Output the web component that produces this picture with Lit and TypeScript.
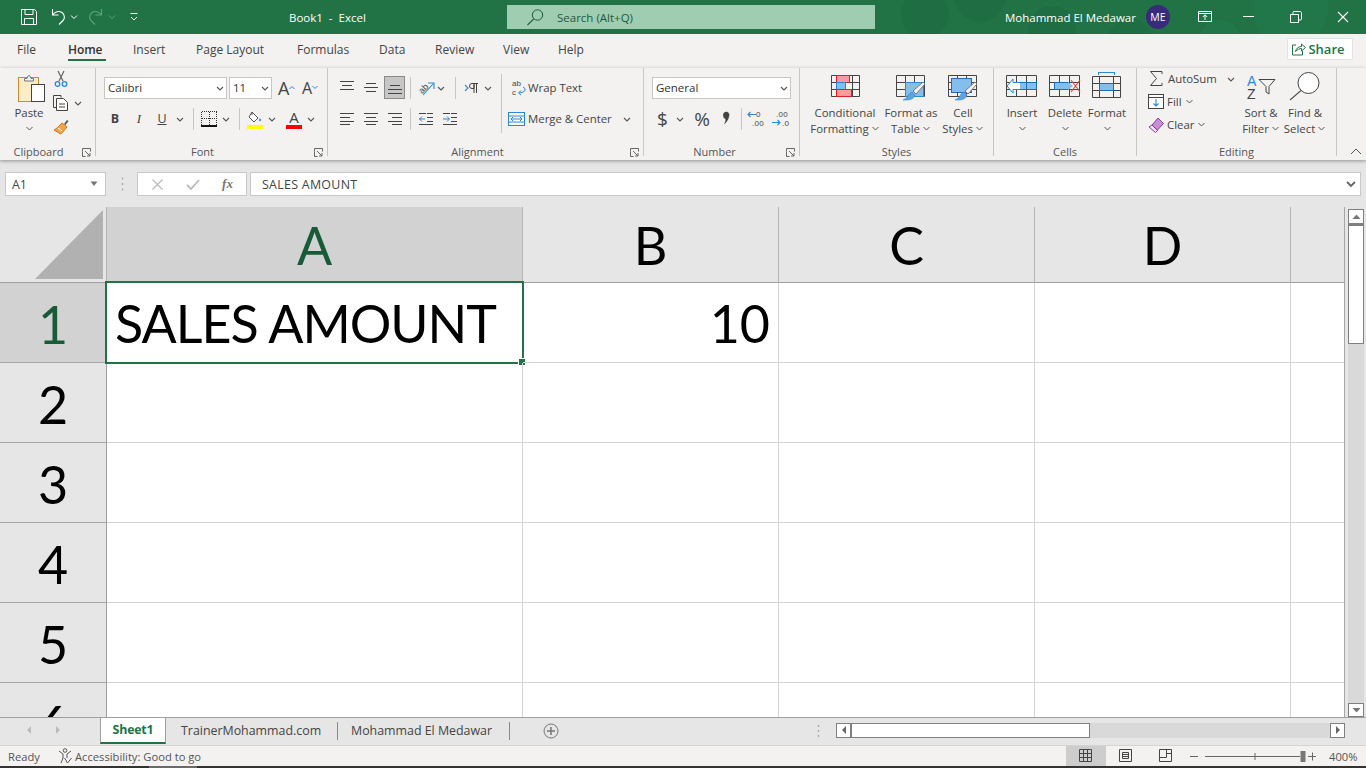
import { LitElement, html, css, svg, TemplateResult, SVGTemplateResult } from "lit";
import { customElement } from "lit/decorators.js";

type Item = number | TemplateResult;
const ic = (w: number, h: number, c: SVGTemplateResult) =>
  html`<svg class="ic" width=${w} height=${h} viewBox="0 0 ${w} ${h}" fill="none">${c}</svg>`;
const row = (items: Item[], cls = "row") =>
  html`<div class=${cls}>${items.map((i) => (typeof i === "number" ? html`<span class="sp" style="width:${i}px"></span>` : i))}</div>`;
const sl = (w: number, c: unknown, cls = "") => html`<span class="sl ${cls}" style="width:${w}px">${c}</span>`;
const chev = (w = 12) => ic(w, 12, svg`<path d="M${w / 2 - 3} 5l3 3 3-3" stroke="#555" stroke-width="1.1"/>`);
const sep = html`<span class="vsep"></span>`;

const hl = (arr: [number, number, number][]) =>
  svg`<path d=${arr.map(([x, y, l]) => `M${x} ${y + 0.5}h${l}`).join("")} stroke="#444"/>`;

const big = (w: number, icon: TemplateResult, l1: string, l2: string | null, arrow = true) => html`
  <div class="big" style="width:${w}px">
    ${icon}
    <div class="bl">${l1}</div>
    <div class="bl">${l2 ?? ""}${arrow ? (l2 ? html`<svg class="ic inl" width="9" height="8" viewBox="0 0 9 8" fill="none"><path d="M1.5 2l3 3 3-3" stroke="#555"/></svg>` : html`<svg class="ic" width="9" height="8" viewBox="0 0 9 8" fill="none"><path d="M1.5 2l3 3 3-3" stroke="#555"/></svg>`) : ""}</div>
  </div>`;

const brush = (x: number, y: number) => svg`
  <g transform="translate(${x} ${y})">
    <path d="M20 0l2 2-9 10-3-3z" fill="#f3f2f1" stroke="#777"/>
    <path d="M9 10l3 3c-1 4-5 5-9 5-1 0-2 0-3 0 3-1 5-4 6-6 1-1 2-2 3-2z" fill="#5ca4dc" stroke="#2b88d8" stroke-width=".6"/>
  </g>`;

const launcher = html`<svg class="launch ic" width="9" height="9" viewBox="0 0 9 9" fill="none"><path d="M.5 3.5V.5h8v3M.5 3.5v5h3M3 3l5 5M8 5v3H5" stroke="#666"/></svg>`;

@customElement("app-root")
export class AppRoot extends LitElement {
  static styles = css`
    :host { display: block; width: 1366px; height: 768px; overflow: hidden; font-family: "Open Sans", "Noto Sans", sans-serif; font-size: 11.4px; color: #444; background: #e6e6e6; }
    * { box-sizing: border-box; }
    .ic { display: block; flex: none; overflow: visible; }
    .inl { display: inline-block; margin-left: 2px; }
    .sp { flex: none; display: block; }
    .sl { flex: none; display: flex; align-items: center; white-space: nowrap; }
    .ctr { justify-content: center; }
    .row { display: flex; align-items: center; height: 23px; }
    .vsep { flex: none; width: 1px; height: 22px; background: #c8c6c4; }

    .title { position: relative; height: 34px; background: #217346; display: flex; align-items: center; color: #fff; overflow: hidden; font-size: 11.5px; }
    .blobs { position: absolute; inset: 0; }
    .title > *:not(.blobs) { position: relative; }
    .search { width: 368px; height: 24px; background: #a0cdb1; color: #1c5b3b; display: flex; align-items: center; font-size: 11.5px; }
    .avatar { width: 24px; height: 24px; border-radius: 50%; background: #392a7b; color: #fff; display: flex; align-items: center; justify-content: center; font-size: 10.5px; }

    .tabs { height: 34px; background: #f3f2f1; display: flex; align-items: center; font-size: 12px; color: #444; padding-bottom: 4px; }
    .home { position: relative; height: 100%; font-weight: 600; color: #333; letter-spacing: -.1px; }
    .home::after { content: ""; position: absolute; left: 0; width: 38px; top: 25px; height: 2px; background: #217346; }
    .share { margin-left: auto; margin-right: 13px; width: 66px; height: 22px; background: #fff; border: 1px solid #e4e2e0; border-radius: 2px; color: #217346; display: flex; align-items: center; justify-content: center; gap: 2px; padding-right: 4px; font-weight: 600; font-size: 13px; }

    .ribbon { height: 92px; background: #f3f2f1; display: grid; grid-template-columns: 96px 232px 316px 156px 194px 143px 200px 1fr; position: relative; z-index: 1; box-shadow: 0 1px 4px rgba(0,0,0,.28); }
    .grp { position: relative; height: 88px; border-right: 1px solid #c8c6c4; display: flex; }
    .grp.last { border: none; }
    .lbl { position: absolute; left: 0; right: 0; top: 78px; height: 12px; line-height: 12px; text-align: center; font-size: 11px; color: #555; }
    .lbl.clip { right: 18px; }
    .lbl.fnt { right: 18px; }
    .lbl.aln { right: 16px; }
    .lbl.nmb { right: 14px; }
    .launch { position: absolute; right: 4px; top: 80px; }
    .col { display: flex; flex-direction: column; gap: 8px; padding-top: 8px; }
    .col.cl { padding-top: 0; gap: 0; margin-top: -1px; }
    .col.cb { padding-top: 0; gap: 1px; margin-top: -1px; }
    .big { flex: none; display: flex; flex-direction: column; align-items: center; padding-top: 4px; }
    .bl { height: 16px; line-height: 16px; white-space: nowrap; display: flex; align-items: center; justify-content: center; }
    .vline { flex: none; width: 1px; height: 59px; margin-top: 6px; background: #c8c6c4; }
    .box { height: 22px; background: #fff; border: 1px solid #c8c6c4; display: flex; align-items: center; padding-left: 3px; justify-content: space-between; font-size: 11.5px; color: #333; flex: none; }
    .bold { font-weight: 700; font-size: 12.5px; }
    .ital { font-style: italic; font-size: 13px; font-family: "Liberation Serif", serif; }
    .und { text-decoration: underline; font-size: 12.5px; }
    .bigA { font-size: 18px; line-height: 20px; color: #444; }
    .num { font-size: 19px; color: #444; }
    .hi { background: #c6c6c6; border: 1px solid #8a8a8a; height: 23px; justify-content: center; }

    .fbar { height: 47px; background: #e6e6e6; padding-top: 12px; display: flex; gap: 0; box-shadow: inset 0 3px 3px -2px rgba(0,0,0,.12); }
    .fbox { height: 24px; background: #fff; border: 1px solid #c8c8c8; display: flex; align-items: center; flex: none; color: #444; font-size: 12.4px; }
    .name { width: 101px; margin-left: 5px; padding: 0 6px; justify-content: space-between; }
    .fns { width: 110px; justify-content: space-around; padding: 0 2px; margin-right: 3px; }
    .fx { font-family: "Liberation Serif", serif; font-style: italic; font-weight: 700; font-size: 13px; color: #777; }
    .input { width: 1111px; padding: 0 4px 0 11px; justify-content: space-between; }
    .input .tx { letter-spacing: .3px; }

    .sheetwrap { height: 510px; display: flex; }
    .sheet { width: 1345px; height: 510px; overflow: hidden; border-right: 1px solid #a6a6a6; display: grid; grid-template-columns: 107px 416px 256px 256px 256px 54px; grid-template-rows: 76px repeat(6, 80px); font-family: Lato, "Liberation Sans", sans-serif; color: #000; background: #fff; }
    .corner { background: #e6e6e6; border-right: 1px solid #b0b0b0; border-bottom: 1px solid #9f9f9f; display: flex; align-items: flex-end; justify-content: flex-end; padding: 0 3px 3px 0; }
    .ch { background: #e6e6e6; border-right: 1px solid #b4b4b4; border-bottom: 1px solid #9f9f9f; display: flex; align-items: center; justify-content: center; font-size: 52px; line-height: 1; padding-top: 1px; }
    .ch.end { border-right: none; }
    .rh { background: #e6e6e6; border-right: 1px solid #9f9f9f; border-bottom: 1px solid #a6a6a6; display: flex; align-items: center; justify-content: center; font-size: 52px; line-height: 1; padding-top: 3px; }
    .sel { background: #d2d2d2; color: #185c37; }
    .c { border-right: 1px solid #d4d4d4; border-bottom: 1px solid #d4d4d4; font-size: 52px; display: flex; align-items: center; padding: 1px 8px 0 8px; white-space: nowrap; position: relative; }
    .c.sales { letter-spacing: -1px; }
    .c.end { border-right: none; }
    .c.r { justify-content: flex-end; }
    .cursor { position: absolute; left: -2px; top: -2px; width: 419px; height: 83px; border: 2px solid #217346; pointer-events: none; }
    .handle { position: absolute; right: -4px; bottom: -4px; width: 6px; height: 6px; background: #217346; border: 1px solid #fff; box-sizing: content-box; }

    .vs { width: 21px; height: 510px; background: #e6e6e6; padding: 2px 0 0 3px; display: flex; flex-direction: column; }
    .sb { width: 16px; background: #fff; border: 1px solid #7f7f7f; flex: none; display: flex; align-items: center; justify-content: center; }
    .sb.up { height: 15px; }
    .sb.thumb { height: 120px; border-top-width: 2px; }
    .sb.down { height: 14px; }
    .track { flex: 1; width: 16px; background: #d9d9d9; }

    .tabsbar { height: 28px; background: #e6e6e6; border-top: 1px solid #9f9f9f; display: flex; align-items: center; font-size: 12.4px; color: #444; padding-bottom: 2px; }
    .stab { height: 26px; margin-top: 0; width: 66px; background: #fff; color: #217346; font-weight: 700; border-bottom: 2px solid #217346; border-left: 1px solid #9f9f9f; border-right: 1px solid #9f9f9f; display: flex; align-items: center; justify-content: center; font-size: 12.4px; letter-spacing: -.2px; }
    .hs { height: 15px; display: flex; width: 509px; }
    .hb { width: 15px; height: 15px; background: #fff; border: 1px solid #7f7f7f; display: flex; align-items: center; justify-content: center; flex: none; }
    .hthumb { width: 239px; height: 15px; background: #fff; border: 1px solid #7f7f7f; flex: none; }
    .htrack { flex: 1; background: #d9d9d9; }
    .tsep { width: 1px; height: 18px; background: #8a8a8a; flex: none; }

    .status { height: 21px; background: #f3f2f1; border-top: 1px solid #d4d4d4; display: flex; align-items: center; font-size: 11.2px; color: #555; }
    .vbtn { width: 40px; height: 20px; display: flex; align-items: center; justify-content: center; flex: none; }
    .vbtn.on { background: #cdcdcd; }
    .foot { height: 2px; background: #333; display: flex; }
    .foot span { width: 48px; margin-left: 149px; background: #6a6a6a; }
    .swatchy { width: 16px; height: 20px; flex-direction: column; justify-content: flex-end; }
    .yel { display: block; width: 16px; height: 4px; background: #ffff00; }
    .red { display: block; width: 16px; height: 4px; background: #ff0000; }
    .aA { font-size: 15px; line-height: 15px; color: #444; }
    .smallA { font-size: 16px; }
    .spacer5 { width: 5px; flex: none; }
    .w173 { width: 173px; }
    .w103 { width: 103px; }
  `;

  render() {
    return html`${this.titleBar()}${this.tabs()}${this.ribbon()}${this.formula()}${this.sheet()}${this.bottom()}`;
  }

  titleBar() {
    return html`<div class="title">
      <svg class="blobs" width="1366" height="34" viewBox="0 0 1366 34"><g fill="#1f6e43"><circle cx="925" cy="14" r="24"/><circle cx="980" cy="-4" r="26"/><circle cx="1052" cy="30" r="24"/><circle cx="1130" cy="40" r="22"/></g><g fill="#22774a"><circle cx="1290" cy="8" r="38"/><circle cx="1220" cy="40" r="20"/></g></svg>
      ${row([
        21,
        ic(16, 16, svg`<path d="M.5.5h13l2 2v13H.5zM4 .5v5h8v-5M3.500 15.500v-6h9v6" stroke="#fff"/>`),
        14,
        ic(15, 16, svg`<path d="M1.500 0v6h6M1.500 6C4 2.500 8 1.500 11 3.500c3 2.500 3 6 1 8l-4 4" stroke="#fff" stroke-width="1.100"/>`),
        4,
        ic(8, 8, svg`<path d="M1 2.500l3 3 3-3" stroke="#fff"/>`),
        10,
        ic(15, 16, svg`<path d="M13.500 0v6h-6M13.500 6C11 2.500 7 1.500 4 3.500c-3 2.500-3 6-1 8l4 4" stroke="#5fa07f" stroke-width="1.100"/>`),
        5,
        ic(8, 8, svg`<path d="M1 2.500l3 3 3-3" stroke="#5fa07f"/>`),
        14,
        ic(8, 8, svg`<path d="M.5.5h7M1 4l3 3 3-3" stroke="#fff"/>`),
        151,
        sl(78, "Book1\u00a0\u00a0-\u00a0\u00a0Excel"),
        140,
      ], "row")}
      <div class="search">
        <span class="sp" style="width:19px"></span>
        ${ic(18, 18, svg`<circle cx="11.500" cy="7" r="5.200" stroke="#1c5b3b"/><path d="M7.800 10.800L1.500 17" stroke="#1c5b3b" stroke-width="1.100"/>`)}
        <span class="sp" style="width:13px"></span>Search (Alt+Q)
      </div>
      ${row([130, sl(134, "Mohammad El Medawar"), 7, html`<div class="avatar">ME</div>`, 27,
        ic(16, 12, svg`<path d="M.5 2.500h13M.5.5h13v10H.5zM7 9V4M4.800 6L7 3.800 9.200 6" stroke="#fff" transform="translate(1 0)"/>`),
        30, ic(12, 2, svg`<path d="M0 .5h11" stroke="#fff"/>`), 35,
        ic(12, 12, svg`<path d="M.5 3.500h8v8h-8zM3 3V1.500q0-1 1-1h6q1 0 1.500 1V8q0 1-1 1H9" stroke="#fff"/>`), 35,
        ic(12, 12, svg`<path d="M1 1l10 10M11 1L1 11" stroke="#fff" stroke-width="1.100"/>`),
      ])}
    </div>`;
  }

  tabs() {
    const t: [string, number][] = [["File", 51], ["Home", 65], ["Insert", 63], ["Page Layout", 101], ["Formulas", 82], ["Data", 56], ["Review", 68], ["View", 55], ["Help", 40]];
    return html`<div class="tabs">
      <span class="sp" style="width:17px"></span>
      ${t.map(([n, w]) => sl(w, n, n === "Home" ? "home" : ""))}
      <div class="share">
        ${ic(15, 14, svg`<path d="M5 3H1.500v10h10V9" stroke="#217346"/><path d="M4.500 9.500c.5-3 3-5 6-5V2l4 3.500-4 3.500V6.500c-2 0-4 1-6 3z" stroke="#217346" fill="#fff"/>`)}
        Share
      </div>
    </div>`;
  }

  ribbon() {
    return html`<div class="ribbon">
      ${this.clipboard()}${this.font()}${this.alignment()}${this.number()}${this.styles()}${this.cells()}${this.editing()}
      <div class="grp last">
        <svg class="ic launch" width="12" height="7" viewBox="0 0 12 7" fill="none"><path d="M1 6l5-5 5 5" stroke="#555"/></svg>
      </div>
    </div>`;
  }

  clipboard() {
    const paste = ic(48, 33, svg`
      <rect x="13.500" y="5.500" width="20" height="24" fill="#fbedc6" stroke="#d08b2e"/>
      <path d="M19.500 9V6.500h2.500q.5-3 2-3t2 3h2.500V9z" fill="#f3f2f1" stroke="#777"/>
      <rect x="26.500" y="12.500" width="13" height="17" fill="#fff" stroke="#444"/>`);
    const cut = ic(16, 18, svg`
      <path d="M5 1l5 10M11 1L6 11" stroke="#666" stroke-width="1.200"/>
      <circle cx="4.500" cy="14" r="2.300" stroke="#2b88d8" stroke-width="1.300"/><circle cx="11.500" cy="14" r="2.300" stroke="#2b88d8" stroke-width="1.300"/>`);
    const copy = ic(16, 16, svg`
      <path d="M8 2.500V.5H.5v12h3" stroke="#444" fill="#f3f2f1"/><path d="M3.500 3.500h7l4 4v8h-11z" stroke="#444" fill="#fff"/><path d="M6 9h6M6 12h6" stroke="#444"/>`);
    const fmt = ic(16, 16, svg`
      <path d="M11 5l3-4 1.500 1-3 4z" fill="#555"/><path d="M9 4l5 4-6 7-7-4 3-2z" fill="#f0a54a" stroke="#d2761e"/><path d="M5 9l4 3" stroke="#fff"/>`);
    return html`<div class="grp">
      <span class="spacer5"></span>
      ${big(48, paste, "Paste", null)}
      <div class="col cb">
        ${row([cut])}
        ${row([copy, 3, chev()])}
        ${row([fmt])}
      </div>
      <div class="lbl clip">Clipboard</div>${launcher}
    </div>`;
  }

  font() {
    return html`<div class="grp">
      <div class="col">
        ${row([8, html`<div class="box" style="width:123px">Calibri${chev()}</div>`, 2, html`<div class="box" style="width:43px">11${chev()}</div>`, 6,
          sl(16, html`<span class="bigA">A</span>${ic(6, 8, svg`<path d="M.5 5l2.500-2.500L5.500 5" stroke="#2b88d8"/>`)}`), 8,
          sl(17, html`<span class="bigA smallA">A</span>${ic(6, 8, svg`<path d="M.5 2l2.500 2.500L5.500 2" stroke="#2b88d8"/>`)}`)])}
        ${row([11, sl(16, "B", "ctr bold"), 8, sl(16, "I", "ctr ital"), 7, sl(16, "U", "ctr und"), 4, chev(), 7, sep, 7,
          ic(16, 16, svg`<g shape-rendering="crispEdges"><path d="M.5.5h15M.5 7.500h15M8 .5v14M.5.5v14M15.500.5v14" stroke="#333" stroke-dasharray="1 1"/><path d="M0 15h16" stroke="#111" stroke-width="1.500"/></g>`), 3, chev(), 7, sep, 7,
          html`<div class="sl swatchy">${ic(16, 14, svg`<path d="M5 1l6 6-4 4-5-5zM5 1v3" stroke="#555" fill="#fff"/><path d="M13 7q1.500 2 .5 3t-1.500-1z" fill="#2b6fb0"/>`)}<span class="yel"></span></div>`, 3, chev(), 8,
          html`<div class="sl swatchy"><span class="aA">A</span><span class="red"></span></div>`, 3, chev()])}
      </div>
      <div class="lbl fnt">Font</div>${launcher}
    </div>`;
  }

  alignment() {
    const al = (a: [number, number, number][]) => ic(14, 16, hl(a));
    return html`<div class="grp">
      <div class="col w173">
        ${row([12, al([[0, 1, 14], [2, 5, 10], [0, 9, 14]]), 10, al([[2, 3, 10], [0, 7, 14], [2, 11, 10]]), 6,
          sl(21, al([[2, 5, 10], [0, 9, 14], [0, 13, 14]]), "hi"), 5, sep, 7,
          ic(17, 16, svg`<text x="0" y="11" font-size="9" fill="#444" font-family="Liberation Sans" transform="rotate(-45 6 8)">ab</text><path d="M5 15L15 4M10 3h6v6" stroke="#2b88d8" stroke-width="1.100"/>`),
          chev(), 8, sep, 9,
          ic(13, 14, svg`<path d="M0 4l3 3-3 3" stroke="#2b88d8" stroke-width="1.100"/><path d="M9 2.500H7a2.500 2.500 0 0 0 0 5h2zM9 2v10M11.500 2v10M7 2.500h6" stroke="#444"/>`), 4, chev()])}
        ${row([12, al([[0, 2, 14], [0, 6, 10], [0, 10, 14], [0, 13, 10]]), 10, al([[0, 2, 14], [2, 6, 10], [0, 10, 14], [2, 13, 10]]), 10, al([[0, 2, 14], [4, 6, 10], [0, 10, 14], [4, 13, 10]]), 8, sep, 8,
          ic(15, 14, svg`<path d="M0 7h6M3 4.500L.5 7 3 9.500" stroke="#2b88d8"/>${hl([[8, 1, 6], [8, 5, 6], [8, 9, 6], [0, 12, 14]])}<path d="M0 1.500h7" stroke="#444"/>`), 9,
          ic(15, 14, svg`<path d="M0 7h6M4 4.500L6.500 7 4 9.500" stroke="#2b88d8"/>${hl([[8, 1, 6], [8, 5, 6], [8, 9, 6], [0, 12, 14]])}<path d="M0 1.500h7" stroke="#444"/>`)])}
      </div>
      <div class="vline"></div>
      <div class="col">
        ${row([9, ic(16, 17, svg`<text x="1" y="7" font-size="8" fill="#444" font-family="Liberation Sans">ab</text><text x="1" y="16" font-size="8" fill="#444" font-family="Liberation Sans">c</text><path d="M12 8q3 1.500 2 3.500t-6 2.500M10 11.500L7.500 14l2.500 2" stroke="#2b88d8"/>`), 1, sl(58, "Wrap Text")])}
        ${row([6, ic(17, 16, svg`<rect x=".5" y="1.500" width="16" height="13" stroke="#2b88d8" fill="#fff"/><path d="M.5 5h16M.5 11h16M3 8h11M5 6L3 8l2 2M12 6l2 2-2 2" stroke="#2b88d8"/>`), 3, sl(93, "Merge & Center"), chev()])}
      </div>
      <div class="lbl aln">Alignment</div>${launcher}
    </div>`;
  }

  number() {
    const dec = (r: boolean) => ic(17, 18, svg`
      <text x=${r ? 4 : 8} y="7" font-size="8" fill="#444" font-family="Liberation Sans" letter-spacing=".3">${r ? ".00" : "0"}</text>
      <text x=${r ? 10 : 4} y="16" font-size="8" fill="#444" font-family="Liberation Sans" letter-spacing=".3">${r ? ".0" : ".00"}</text>
      ${r ? svg`<path d="M0 12.500h8M5.500 10l2.500 2.500L5.500 15" stroke="#2b88d8" stroke-width="1.100"/>`
          : svg`<path d="M0 4.500h8M2.500 2L0 4.500 2.500 7" stroke="#2b88d8" stroke-width="1.100"/>`}`);
    return html`<div class="grp">
      <div class="col">
        ${row([8, html`<div class="box" style="width:139px">General${chev()}</div>`])}
        ${row([13, sl(11, "$", "ctr num"), 6, chev(), 8, sl(16, "%", "ctr num"), 10,
          ic(12, 16, svg`<path d="M3 4a3.200 3.200 0 1 1 6 1.500q-.5 4-5 8 2-3.500 1.500-5.500Q3 7 3 4z" fill="#444"/>`), 9, sep, 6, dec(false), 7, dec(true)])}
      </div>
      <div class="lbl nmb">Number</div>${launcher}
    </div>`;
  }

  styles() {
    const grid = (x: number, y: number, w: number, h: number, cols: number[], rows: number[]) =>
      svg`<path d="M${x + .5} ${y + .5}h${w}v${h}h-${w}z${cols.map((c) => `M${x + c + .5} ${y}v${h + 1}`).join("")}${rows.map((r) => `M${x} ${y + r + .5}h${w + 1}`).join("")}" stroke="#444"/>`;
    const cond = ic(28, 33, svg`
      ${grid(0, 3, 28, 21, [7, 14, 21], [7, 14])}
      <rect x="5.500" y="3.500" width="13" height="7" fill="#fb9a9f" stroke="#e02020"/>
      <rect x="5.500" y="10.500" width="9" height="7" fill="#83beec" stroke="#2b88d8"/>
      <rect x="5.500" y="17.500" width="15" height="7" fill="#fb9a9f" stroke="#e02020"/>`);
    const tbl = ic(30, 33, svg`
      ${grid(0, 3, 28, 21, [9, 18], [7, 14])}
      <rect x="9.500" y="10.500" width="18" height="14" fill="#83beec" stroke="#2b88d8"/>
      ${brush(7, 10)}`);
    const cell = ic(30, 33, svg`
      ${grid(0, 3, 28, 21, [9, 18], [7, 14])}
      <rect x="3.500" y="6.500" width="20" height="14" fill="#83beec" stroke="#1f6cb0"/>
      ${brush(7, 10)}`);
    return html`<div class="grp">
      <span class="sp" style="width:8px"></span>
      ${big(74, cond, "Conditional", "Formatting")}
      ${big(58, tbl, "Format as", "Table")}
      ${big(46, cell, "Cell", "Styles")}
      <div class="lbl">Styles</div>
    </div>`;
  }

  cells() {
    const g = svg`<path d="M.5 3.500h30v21H.5zM.5 10.500h30M.5 17.500h30M10.500 3.500v21M20.500 3.500v21" stroke="#444"/>`;
    const ins = ic(32, 33, svg`${g}<rect x="10.500" y="10.500" width="20" height="7" fill="#83beec" stroke="#1f6cb0"/><path d="M20.500 10.500v7" stroke="#1f6cb0"/><path d="M14 10.500H7V7L1 14l6 7v-3.500h7" fill="#fff" stroke="#2b88d8"/>`);
    const del = ic(32, 33, svg`${g}<rect x="5.500" y="10.500" width="14" height="7" fill="#83beec" stroke="#1f6cb0"/><path d="M19 10l5 4-5 4z" fill="#83beec"/><path d="M22 8l9 12M31 8l-9 12" stroke="#f04040" stroke-width="1.100"/>`);
    const fmt = ic(30, 33, svg`<path d="M6 0.500h16M6.500 0v3M22.500 0v3" stroke="#2b88d8"/>
      <path d="M.5 4.500h28v21H.5zM.5 11.500h28M.5 18.500h28M7.500 4.500v21M21.500 4.500v21" stroke="#444"/>
      <rect x="7.500" y="11.500" width="14" height="7" fill="#83beec" stroke="#1f6cb0"/>`);
    return html`<div class="grp">
      <span class="sp" style="width:7px"></span>
      ${big(42, ins, "Insert", null)}
      ${big(44, del, "Delete", null)}
      ${big(40, fmt, "Format", null)}
      <div class="lbl">Cells</div>
    </div>`;
  }

  editing() {
    const sum = ic(13, 15, svg`<path d="M12 3V.5H.5L6.500 7.500.5 14.500H12V12" stroke="#444"/>`);
    const fill = ic(16, 15, svg`<rect x=".5" y=".5" width="15" height="14" stroke="#444" fill="#fff"/><path d="M.5 3.500h15" stroke="#444"/><path d="M8 5v7M5.500 9.500L8 12l2.500-2.500" stroke="#2b88d8" stroke-width="1.100"/>`);
    const clear = ic(16, 16, svg`<path d="M10 1l5.500 5.500-6 6.500L4 8z" fill="#c98fd6" stroke="#8a3f9e"/><path d="M4 8l5.500 5.500-2 2L1 10z" fill="#f3e0f7" stroke="#8a3f9e"/>`);
    const sort = ic(30, 33, svg`
      <text x="1" y="14" font-size="14" fill="#2b88d8" font-family="Liberation Sans">A</text>
      <text x="1" y="27" font-size="14" fill="#444" font-family="Liberation Sans">Z</text>
      <path d="M13 7.500h16l-6 7v7.500l-3-2v-5.500z" stroke="#444" fill="#f3f2f1"/>`);
    const find = ic(32, 33, svg`<circle cx="19.500" cy="11" r="10.500" stroke="#444" fill="#fff"/><path d="M12 18.500L1 28" stroke="#555" stroke-width="1.100"/>`);
    return html`<div class="grp">
      <div class="col cl w103">
        ${row([13, sum, 5, sl(50, "AutoSum"), 7, chev()])}
        ${row([11, fill, 3, sl(18, "Fill"), ic(9, 8, svg`<path d="M1.500 2l3 3 3-3" stroke="#555"/>`)])}
        ${row([11, clear, 3, sl(30, "Clear"), ic(9, 8, svg`<path d="M1.500 2l3 3 3-3" stroke="#555"/>`)])}
      </div>
      ${big(42, sort, "Sort &", "Filter")}
      ${big(46, find, "Find &", "Select")}
      <div class="lbl">Editing</div>
    </div>`;
  }

  formula() {
    return html`<div class="fbar">
      <div class="fbox name"><span>A1</span>${ic(9, 6, svg`<path d="M.5.5h7L4 5z" fill="#777"/>`)}</div>
      <span class="sp" style="width:15px"></span>
      ${ic(4, 24, svg`<path d="M1.500 5.500v2M1.500 11v2M1.500 16.500v2" stroke="#aaa" stroke-width="1.500"/>`)}
      <span class="sp" style="width:12px"></span>
      <div class="fbox fns">
        ${ic(13, 13, svg`<path d="M1.500 1.500l10 10M11.500 1.500l-10 10" stroke="#bbb" stroke-width="1.300"/>`)}
        ${ic(14, 13, svg`<path d="M1 7l4 4 8-9" stroke="#bbb" stroke-width="1.800"/>`)}
        <span class="fx">fx</span>
      </div>
      <div class="fbox input"><span class="tx">SALES AMOUNT</span>${ic(10, 7, svg`<path d="M1 1l4 4 4-4" stroke="#666" stroke-width="1.800"/>`)}</div>
    </div>`;
  }

  sheet() {
    const rows = [2, 3, 4, 5, 6];
    return html`<div class="sheetwrap">
      <div class="sheet">
        <div class="corner">${ic(68, 69, svg`<path d="M68 0v69H0z" fill="#b1b1b1"/>`)}</div>
        <div class="ch sel">A</div><div class="ch">B</div><div class="ch">C</div><div class="ch">D</div><div class="ch end"></div>
        <div class="rh sel">1</div>
        <div class="c sales">SALES AMOUNT<div class="cursor"><div class="handle"></div></div></div>
        <div class="c r">10</div><div class="c"></div><div class="c"></div><div class="c end"></div>
        ${rows.map((r) => html`<div class="rh">${r}</div><div class="c"></div><div class="c"></div><div class="c"></div><div class="c"></div><div class="c end"></div>`)}
      </div>
      <div class="vs">
        <div class="sb up">${ic(9, 6, svg`<path d="M4.500.5L8.500 5h-8z" fill="#777"/>`)}</div>
        <div class="sb thumb"></div>
        <div class="track"></div>
        <div class="sb down">${ic(9, 6, svg`<path d="M4.500 5.500L8.500 1h-8z" fill="#777"/>`)}</div>
      </div>
    </div>`;
  }

  bottom() {
    return html`
      <div class="tabsbar">
        <span class="sp" style="width:26px"></span>
        ${ic(6, 9, svg`<path d="M5 0v8L1 4z" fill="#bbb"/>`)}
        <span class="sp" style="width:23px"></span>
        ${ic(6, 9, svg`<path d="M1 0v8l4-4z" fill="#bbb"/>`)}
        <span class="sp" style="width:39px"></span>
        <div class="stab">Sheet1</div>
        <span class="sp" style="width:15px"></span>
        ${sl(156, "TrainerMohammad.com")}
        <div class="tsep"></div>
        <span class="sp" style="width:13px"></span>
        ${sl(158, "Mohammad El Medawar")}
        <div class="tsep"></div>
        <span class="sp" style="width:33px"></span>
        ${ic(16, 16, svg`<circle cx="8" cy="8" r="7" stroke="#777"/><path d="M8 4v8M4 8h8" stroke="#777" stroke-width="1.500"/>`)}
        <span class="sp" style="width:258px"></span>
        ${ic(4, 14, svg`<path d="M1.500 1v2M1.500 6v2M1.500 11v2" stroke="#aaa" stroke-width="1.500"/>`)}
        <span class="sp" style="width:15px"></span>
        <div class="hs">
          <div class="hb">${ic(6, 9, svg`<path d="M5 0v8L1 4z" fill="#666"/>`)}</div>
          <div class="hthumb"></div>
          <div class="htrack"></div>
          <div class="hb">${ic(6, 9, svg`<path d="M1 0v8l4-4z" fill="#666"/>`)}</div>
        </div>
      </div>
      <div class="status">
        <span class="sp" style="width:8px"></span>${sl(50, "Ready")}
        ${ic(15, 16, svg`<circle cx="7" cy="2.500" r="1.800" stroke="#555"/><path d="M1 3l4 3v4l-2 5M13 3L9 6v4M6.500 10l2 3M8 13l1.500 2 4-5" stroke="#555"/>`)}
        <span class="sp" style="width:2px"></span>${sl(130, "Accessibility: Good to go")}
        <span class="sp" style="width:861px"></span>
        <div class="vbtn on">${ic(14, 14, svg`<path d="M.5.5h12v12H.5zM4.500.5v12M8.500.5v12M.5 4.500h12M.5 8.500h12" stroke="#444"/>`)}</div>
        <div class="vbtn">${ic(14, 14, svg`<path d="M.5.5h12v12H.5zM3.500 3.500h6v6h-6zM3.500 5.500h6M3.500 7.500h6" stroke="#444"/>`)}</div>
        <div class="vbtn">${ic(14, 14, svg`<path d="M.5.5h12v12H.5zM.5 8.500h7v-8M7.500 4.500h5" stroke="#444"/>`)}</div>
        <span class="sp" style="width:4px"></span>
        ${ic(9, 3, svg`<path d="M0 1.500h8" stroke="#666"/>`)}
        <span class="sp" style="width:6px"></span>
        ${ic(102, 12, svg`<path d="M0 6.500h95M50 3v7" stroke="#666"/><rect x="95.500" y="1" width="5" height="11" fill="#777"/>`)}
        <span class="sp" style="width:1px"></span>
        ${ic(9, 9, svg`<path d="M0 4.500h8M4.500 .5v8" stroke="#666"/>`)}
        <span class="sp" style="width:12px"></span>
        ${sl(30, "400%")}
      </div>
      <div class="foot"><span></span></div>`;
  }
}
